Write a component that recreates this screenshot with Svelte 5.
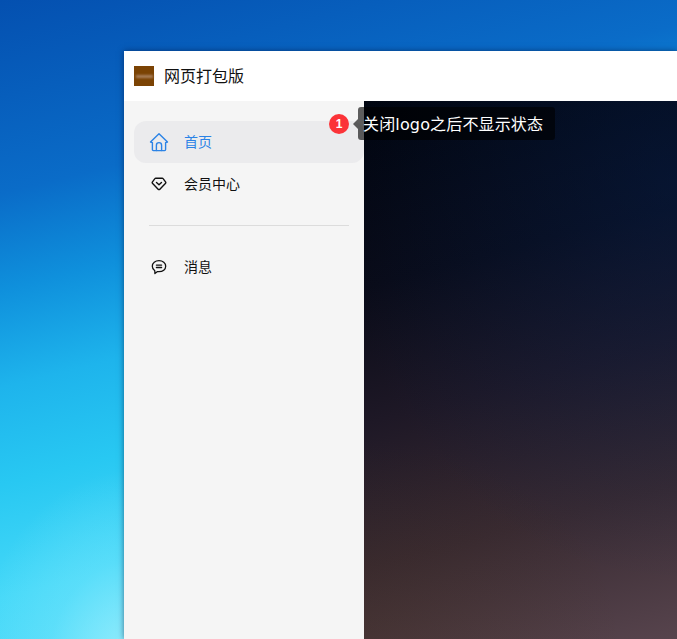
<script lang="ts">
	const mainNav = [
		{ id: 'home', label: '首页', active: true },
		{ id: 'vip', label: '会员中心', active: false }
	];
	const subNav = [{ id: 'msg', label: '消息', active: false }];
</script>

{#snippet icon(id: string)}
	{#if id === 'home'}
		<svg class="icon" viewBox="0 0 20 20" width="20" height="20" fill="none" stroke="currentColor" stroke-width="1.4" stroke-linejoin="round" stroke-linecap="round">
			<path d="M1.500 10 10 1.700 18.500 10 16.600 10.600V17.600A1 1 0 0 1 15.600 18.600H4.400A1 1 0 0 1 3.400 17.600V10.600z" />
			<path d="M7.400 18.600V13.200A2.600 2.600 0 0 1 12.600 13.200V18.600" />
		</svg>
	{:else if id === 'vip'}
		<svg class="icon" viewBox="0 0 16 16" width="16" height="16" fill="none" stroke="currentColor" stroke-width="1.4" stroke-linejoin="round" stroke-linecap="round">
			<path d="M4.800 2.200H11.200C11.600 2.200 11.900 2.400 12.100 2.700L14.700 6.200C14.900 6.500 14.900 6.900 14.600 7.200L8.600 13.400C8.300 13.700 7.700 13.700 7.400 13.400L1.400 7.200C1.100 6.900 1.100 6.500 1.300 6.200L3.900 2.700C4.100 2.400 4.400 2.200 4.800 2.200z" />
			<path d="M5.500 6.400 8 8.700 10.500 6.400" />
		</svg>
	{:else}
		<svg class="icon" viewBox="0 0 16 16" width="16" height="16" fill="none" stroke="currentColor" stroke-width="1.3" stroke-linecap="round" stroke-linejoin="round">
			<path d="M8 1.600C11.800 1.600 14.700 4 14.700 7.200S11.800 12.700 8 12.700H6.200L3.900 14.500 3.800 11.700C2.300 10.700 1.300 9.100 1.300 7.200 1.300 4 4.200 1.600 8 1.600z" />
			<path d="M5.400 6.100H10.600M5.400 8.500H10.600" />
		</svg>
	{/if}
{/snippet}

<div class="desktop">
	<div class="window">
		<header class="titlebar">
			<div class="logo"><span class="logo-mark"></span></div>
			<span class="app-name">网页打包版</span>
		</header>
		<div class="body">
			<aside class="sidebar">
				<nav class="nav">
					{#each mainNav as item}
						<div class="nav-item" class:active={item.active}>
							<span class="icon-slot">{@render icon(item.id)}</span>
							<span class="label">{item.label}</span>
						</div>
					{/each}
				</nav>
				<div class="divider"></div>
				<nav class="nav">
					{#each subNav as item}
						<div class="nav-item">
							<span class="icon-slot">{@render icon(item.id)}</span>
							<span class="label">{item.label}</span>
						</div>
					{/each}
				</nav>
				<div class="hint">
					<span class="badge">1</span>
					<div class="tooltip"><span class="tip-text">关闭logo之后不显示状态</span></div>
				</div>
			</aside>
			<main class="content"></main>
		</div>
	</div>
</div>

<style>
	:global(body) {
		margin: 0;
		overflow: hidden;
	}

	.desktop {
		width: 677px;
		height: 639px;
		box-sizing: border-box;
		padding: 51px 0 0 124px;
		overflow: hidden;
		font-family: "Noto Sans CJK SC", "Liberation Sans", sans-serif;
		background:
			radial-gradient(ellipse 160px 200px at 135px 670px, rgba(170, 242, 254, .85) 0%, rgba(120, 230, 252, .4) 55%, rgba(80, 215, 248, 0) 100%),
			linear-gradient(166deg, #0450b0 0%, #0a6cc8 24%, #0f90dc 36%, #1eb4ec 48%, #28c8f2 60%, #45d8f8 74%, #5cdffa 100%);
	}

	.window {
		width: 553px;
		height: 588px;
		display: flex;
		flex-direction: column;
		background: #fff;
		box-shadow: 0 0 6px rgba(0, 20, 60, .55);
	}

	.titlebar {
		height: 50px;
		flex-shrink: 0;
		display: flex;
		align-items: center;
		gap: 10px;
		padding-left: 10px;
		background: #fff;
		color: #111;
		font-size: 16px;
	}

	.app-name {
		padding-bottom: 2px;
	}

	.logo {
		width: 20px;
		height: 20px;
		display: flex;
		align-items: center;
		justify-content: center;
		background: #7b4304;
	}

	.logo-mark {
		width: 17px;
		height: 3px;
		background: #a87f5c;
		filter: blur(.8px);
	}

	.body {
		flex: 1;
		display: flex;
		min-height: 0;
	}

	.sidebar {
		width: 240px;
		flex-shrink: 0;
		box-sizing: border-box;
		position: relative;
		padding: 20px 0 0 10px;
		background: #f5f5f5;
	}

	.nav {
		display: flex;
		flex-direction: column;
	}

	.nav-item {
		height: 42px;
		display: flex;
		align-items: center;
		gap: 15px;
		padding-left: 15px;
		border-radius: 12px;
		font-size: 14px;
		color: #111;
	}

	.nav-item.active {
		background: #ebebed;
		color: #2b83e6;
	}

	.label {
		padding-bottom: 2px;
	}

	.icon-slot {
		width: 20px;
		height: 20px;
		display: flex;
		align-items: center;
		justify-content: center;
	}

	.icon {
		display: block;
	}

	.divider {
		height: 1px;
		margin: 20px 15px;
		background: #dcdcdc;
	}

	.hint {
		position: absolute;
		top: 6px;
		left: 205px;
		display: flex;
		align-items: center;
		gap: 9px;
		z-index: 2;
	}

	.badge {
		width: 20px;
		height: 20px;
		border-radius: 50%;
		display: flex;
		align-items: center;
		justify-content: center;
		background: #fb3338;
		color: #fff;
		font: 700 12px "Liberation Sans", sans-serif;
	}

	.tooltip {
		position: relative;
		height: 33px;
		display: flex;
		align-items: center;
		padding: 0 12px 0 5px;
		border-radius: 3px;
		background: rgba(0, 0, 0, .62);
		color: #fff;
		font-family: "DejaVu Sans", "Noto Sans CJK SC", sans-serif;
		font-size: 16px;
		letter-spacing: .15px;
		white-space: nowrap;
	}

	.tip-text {
		padding-bottom: 1px;
	}

	.tooltip::before {
		content: '';
		position: absolute;
		left: -5px;
		top: 50%;
		margin-top: -5px;
		border-style: solid;
		border-width: 5px 5px 5px 0;
		border-color: transparent rgba(0, 0, 0, .62) transparent transparent;
	}

	.content {
		flex: 1;
		background:
			radial-gradient(ellipse 340px 400px at 100% 15%, rgba(5, 35, 85, .42), rgba(5, 35, 85, 0) 100%),
			radial-gradient(ellipse 260px 200px at 0% 100%, rgba(70, 45, 15, .22), rgba(70, 45, 15, 0) 100%),
			linear-gradient(165deg, #00040e 0%, #090b18 30%, #1e1826 52%, #382a32 75%, #57444d 100%);
	}
</style>
